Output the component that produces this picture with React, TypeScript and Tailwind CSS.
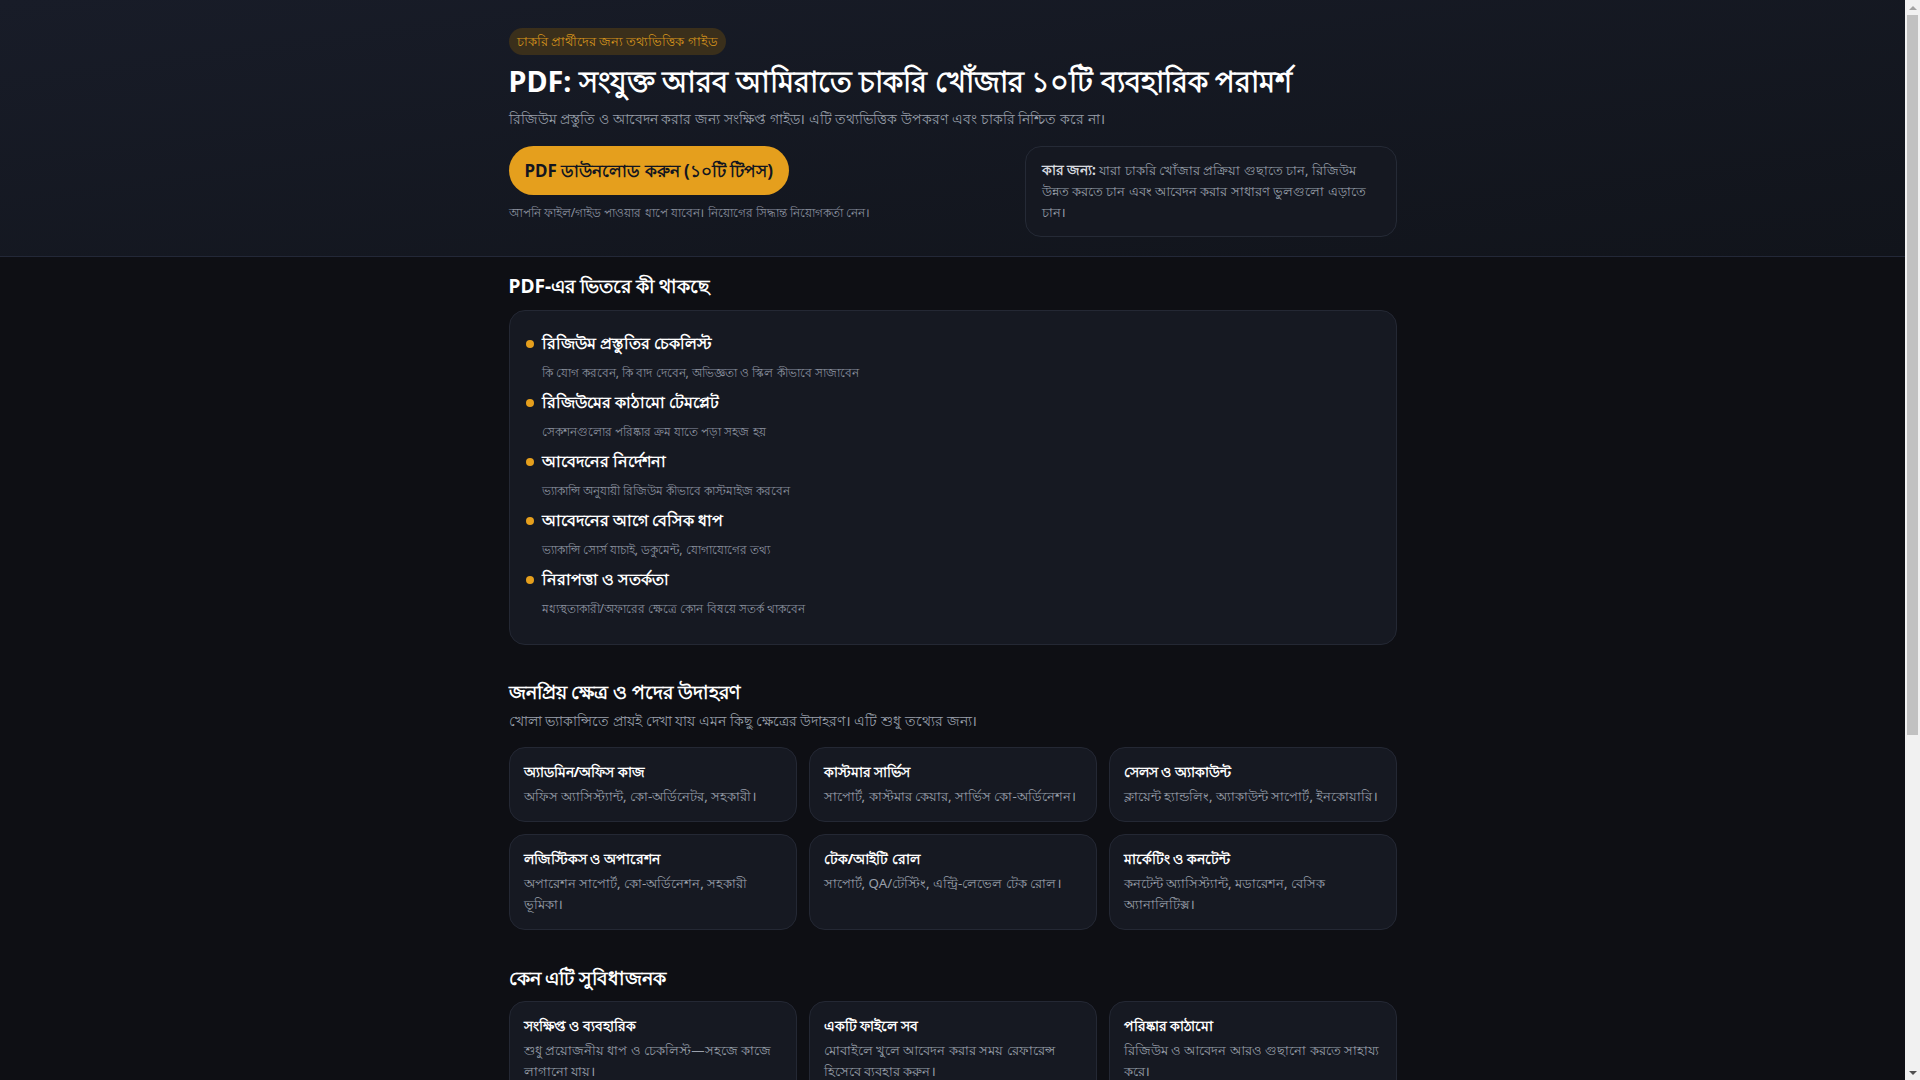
import React from "react";

const includes = [
  { title: "রিজিউম প্রস্তুতির চেকলিস্ট", text: "কি যোগ করবেন, কি বাদ দেবেন, অভিজ্ঞতা ও স্কিল কীভাবে সাজাবেন" },
  { title: "রিজিউমের কাঠামো টেমপ্লেট", text: "সেকশনগুলোর পরিষ্কার ক্রম যাতে পড়া সহজ হয়" },
  { title: "আবেদনের নির্দেশনা", text: "ভ্যাকান্সি অনুযায়ী রিজিউম কীভাবে কাস্টমাইজ করবেন" },
  { title: "আবেদনের আগে বেসিক ধাপ", text: "ভ্যাকান্সি সোর্স যাচাই, ডকুমেন্ট, যোগাযোগের তথ্য" },
  { title: "নিরাপত্তা ও সতর্কতা", text: "মধ্যস্থতাকারী/অফারের ক্ষেত্রে কোন বিষয়ে সতর্ক থাকবেন" }
];

const fields = [
  { title: "অ্যাডমিন/অফিস কাজ", text: "অফিস অ্যাসিস্ট্যান্ট, কো-অর্ডিনেটর, সহকারী।" },
  { title: "কাস্টমার সার্ভিস", text: "সাপোর্ট, কাস্টমার কেয়ার, সার্ভিস কো-অর্ডিনেশন।" },
  { title: "সেলস ও অ্যাকাউন্ট", text: "ক্লায়েন্ট হ্যান্ডলিং, অ্যাকাউন্ট সাপোর্ট, ইনকোয়ারি।" },
  { title: "লজিস্টিকস ও অপারেশন", text: "অপারেশন সাপোর্ট, কো-অর্ডিনেশন, সহকারী ভূমিকা।" },
  { title: "টেক/আইটি রোল", text: "সাপোর্ট, QA/টেস্টিং, এন্ট্রি-লেভেল টেক রোল।" },
  { title: "মার্কেটিং ও কনটেন্ট", text: "কনটেন্ট অ্যাসিস্ট্যান্ট, মডারেশন, বেসিক অ্যানালিটিক্স।" }
];

const benefits = [
  { title: "সংক্ষিপ্ত ও ব্যবহারিক", text: "শুধু প্রয়োজনীয় ধাপ ও চেকলিস্ট—সহজে কাজে লাগানো যায়।" },
  { title: "একটি ফাইলে সব", text: "মোবাইলে খুলে আবেদন করার সময় রেফারেন্স হিসেবে ব্যবহার করুন।" },
  { title: "পরিষ্কার কাঠামো", text: "রিজিউম ও আবেদন আরও গুছানো করতে সাহায্য করে।" }
];

function InfoCard({ title, text }: { title: string; text: string }) {
  return (
    <div className="rounded-2xl border border-[#242834] bg-[#161922] px-3.5 pt-3.5 pb-3.5">
      <h3 className="text-[14.4px] font-bold leading-5 text-white">{title}</h3>
      <p className="mt-1 text-[13.3px] leading-[21px] text-[#9aa0ac]">{text}</p>
    </div>
  );
}

// stand-in for the browser's classic scrollbar seen in the shot
function Scrollbar() {
  return (
    <div className="flex w-[15px] shrink-0 flex-col items-center bg-[#f1f1f1]">
      <div className="flex h-[15px] w-full items-center justify-center">
        <span className="h-0 w-0 border-x-[4px] border-b-[4px] border-x-transparent border-b-[#a3a3a3]" />
      </div>
      <div className="h-[720px] w-[11px] bg-[#c1c1c1]" />
      <div className="flex-1" />
      <div className="flex h-[15px] w-full items-center justify-center">
        <span className="h-0 w-0 border-x-[4px] border-t-[4px] border-x-transparent border-t-[#505050]" />
      </div>
    </div>
  );
}

export default function App() {
  return (
    <div className="flex h-screen overflow-hidden bg-[#0e0f14] font-['Noto_Sans','DejaVu_Sans',sans-serif] text-white">
      <div className="min-w-0 flex-1 overflow-hidden">
        <header className="border-b border-[#232838] bg-gradient-to-br from-[#181c28] to-[#11141b]">
          <div className="mx-auto max-w-[920px] px-4 pt-7 pb-[19px]">
            <span className="inline-flex h-[27px] items-center rounded-full bg-[#3a2f1b] px-2 text-[12.8px] text-[#d8951c]">
              চাকরি প্রার্থীদের জন্য তথ্যভিত্তিক গাইড
            </span>
            <h1 className="mt-2 text-[28.8px] font-bold leading-9 text-white">
              PDF: সংযুক্ত আরব আমিরাতে চাকরি খোঁজার ১০টি ব্যবহারিক পরামর্শ
            </h1>
            <p className="mt-2.5 text-[14.3px] leading-5 text-[#9aa0ac]">
              রিজিউম প্রস্তুতি ও আবেদন করার জন্য সংক্ষিপ্ত গাইড। এটি তথ্যভিত্তিক উপকরণ এবং চাকরি নিশ্চিত করে না।
            </p>
            <div className="mt-[17px] flex items-start justify-between gap-6">
              <div>
                <button className="h-[49px] rounded-full bg-[#e59f1d] px-4 text-[17px] font-bold text-[#121520]">
                  PDF ডাউনলোড করুন (১০টি টিপস)
                </button>
                <p className="mt-2 text-[12.3px] leading-5 text-[#8d93a0]">
                  আপনি ফাইল/গাইড পাওয়ার ধাপে যাবেন। নিয়োগের সিদ্ধান্ত নিয়োগকর্তা নেন।
                </p>
              </div>
              <div className="w-[372px] rounded-2xl border border-[#252a36] bg-[#151821] px-4 py-[13px] text-[13px] leading-[21px] text-[#9aa0ac]">
                <b className="text-[13.5px] font-bold text-[#d6d9df]">কার জন্য:</b> যারা চাকরি খোঁজার প্রক্রিয়া গুছাতে চান, রিজিউম উন্নত করতে চান এবং আবেদন করার সাধারণ ভুলগুলো এড়াতে চান।
              </div>
            </div>
          </div>
        </header>

        <main className="mx-auto max-w-[920px] px-4 pb-16">
          <section className="pt-[15px]">
            <h2 className="text-[19.2px] font-bold leading-7 text-white">PDF-এর ভিতরে কী থাকছে</h2>
            <div className="mt-[10px] rounded-2xl border border-[#242834] bg-[#161922] px-4 pt-[18px] pb-[23px]">
              <ul className="flex flex-col gap-[3px]">
                {includes.map((item) => (
                  <li key={item.title} className="flex gap-2">
                    <span className="mt-[11px] h-2 w-2 shrink-0 rounded-full bg-[#e59f1d]" />
                    <div>
                      <p className="text-[16px] font-bold leading-7 text-white">{item.title}</p>
                      <p className="mt-[3px] text-[12.2px] leading-[25px] text-[#8d93a0]">{item.text}</p>
                    </div>
                  </li>
                ))}
              </ul>
            </div>
          </section>

          <section className="pt-[33px]">
            <h2 className="text-[19.2px] font-bold leading-7 text-white">জনপ্রিয় ক্ষেত্র ও পদের উদাহরণ</h2>
            <p className="mt-[5px] text-[14.3px] leading-5 text-[#9aa0ac]">
              খোলা ভ্যাকান্সিতে প্রায়ই দেখা যায় এমন কিছু ক্ষেত্রের উদাহরণ। এটি শুধু তথ্যের জন্য।
            </p>
            <div className="mt-4 grid grid-cols-3 gap-3">
              {fields.map((f) => (
                <InfoCard key={f.title} title={f.title} text={f.text} />
              ))}
            </div>
          </section>

          <section className="pt-[34px]">
            <h2 className="text-[19.2px] font-bold leading-7 text-white">কেন এটি সুবিধাজনক</h2>
            <div className="mt-[9px] grid grid-cols-3 gap-3">
              {benefits.map((f) => (
                <InfoCard key={f.title} title={f.title} text={f.text} />
              ))}
            </div>
          </section>
        </main>
      </div>
      <Scrollbar />
    </div>
  );
}
